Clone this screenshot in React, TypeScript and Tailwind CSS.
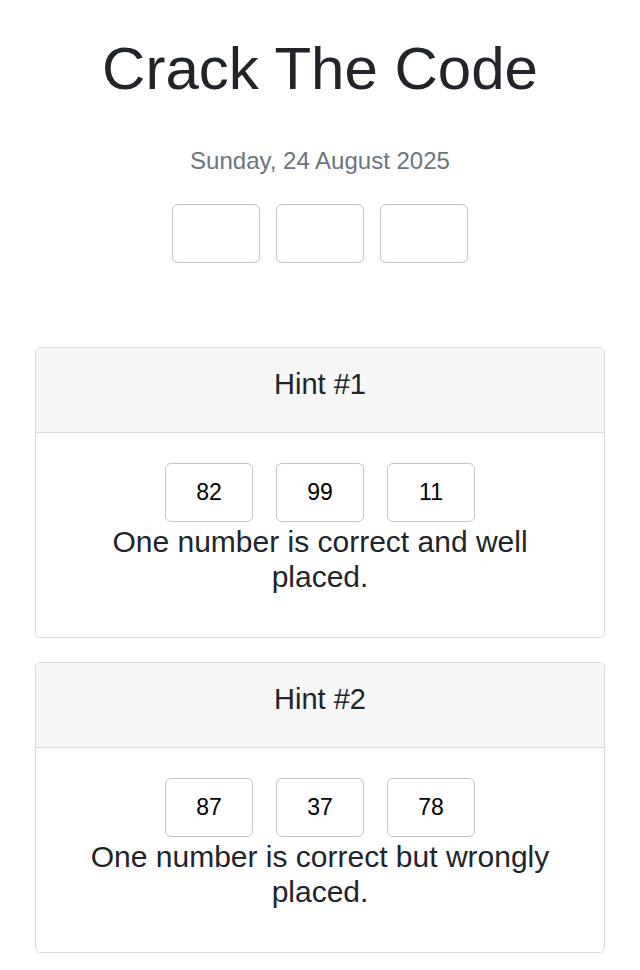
const hints = [
  { id: 1, numbers: ["82", "99", "11"], text: "One number is correct and well placed." },
  { id: 2, numbers: ["87", "37", "78"], text: "One number is correct but wrongly placed." },
];

export default function App() {
  return (
    <div className="min-h-screen bg-white px-[35px] pt-[33px] text-[#212529] font-['Liberation_Sans',Arial,sans-serif]">
      <h1 className="text-center text-[60px] leading-[72px]">Crack The Code</h1>

      <p className="mt-[41px] text-center text-[24px] leading-[29px] text-[#6c757d]">Sunday, 24 August 2025</p>

      {/* Guess inputs */}
      <div className="mt-[29px] flex justify-center gap-[16px]">
        {[0, 1, 2].map((i) => (
          <input
            key={i}
            type="text"
            className="h-[59px] w-[88px] rounded-[6px] border border-[#c4c4c4] bg-white text-center text-[24px] outline-none"
          />
        ))}
      </div>

      {/* Hints */}
      <div className="mt-[84px] flex flex-col gap-[24px]">
        {hints.map((hint) => (
          <div key={hint.id} className="overflow-hidden rounded-[5px] border border-[#dcdcdc]">
            <div className="h-[85px] border-b border-[#dcdcdc] bg-[#f7f7f7] pt-[19px] text-center text-[29px] leading-[35px]">
              Hint #{hint.id}
            </div>
            <div className="px-[40px] pb-[43px] pt-[30px] text-center">
              <div className="flex justify-center gap-[23px]">
                {hint.numbers.map((n, i) => (
                  <div
                    key={i}
                    className="flex h-[59px] w-[88px] items-center justify-center rounded-[6px] border border-[#c4c4c4] text-[23px] text-black"
                  >
                    {n}
                  </div>
                ))}
              </div>
              <p className="mx-auto mt-[2px] max-w-[480px] text-[30px] leading-[35px]">{hint.text}</p>
            </div>
          </div>
        ))}
      </div>
    </div>
  );
}
